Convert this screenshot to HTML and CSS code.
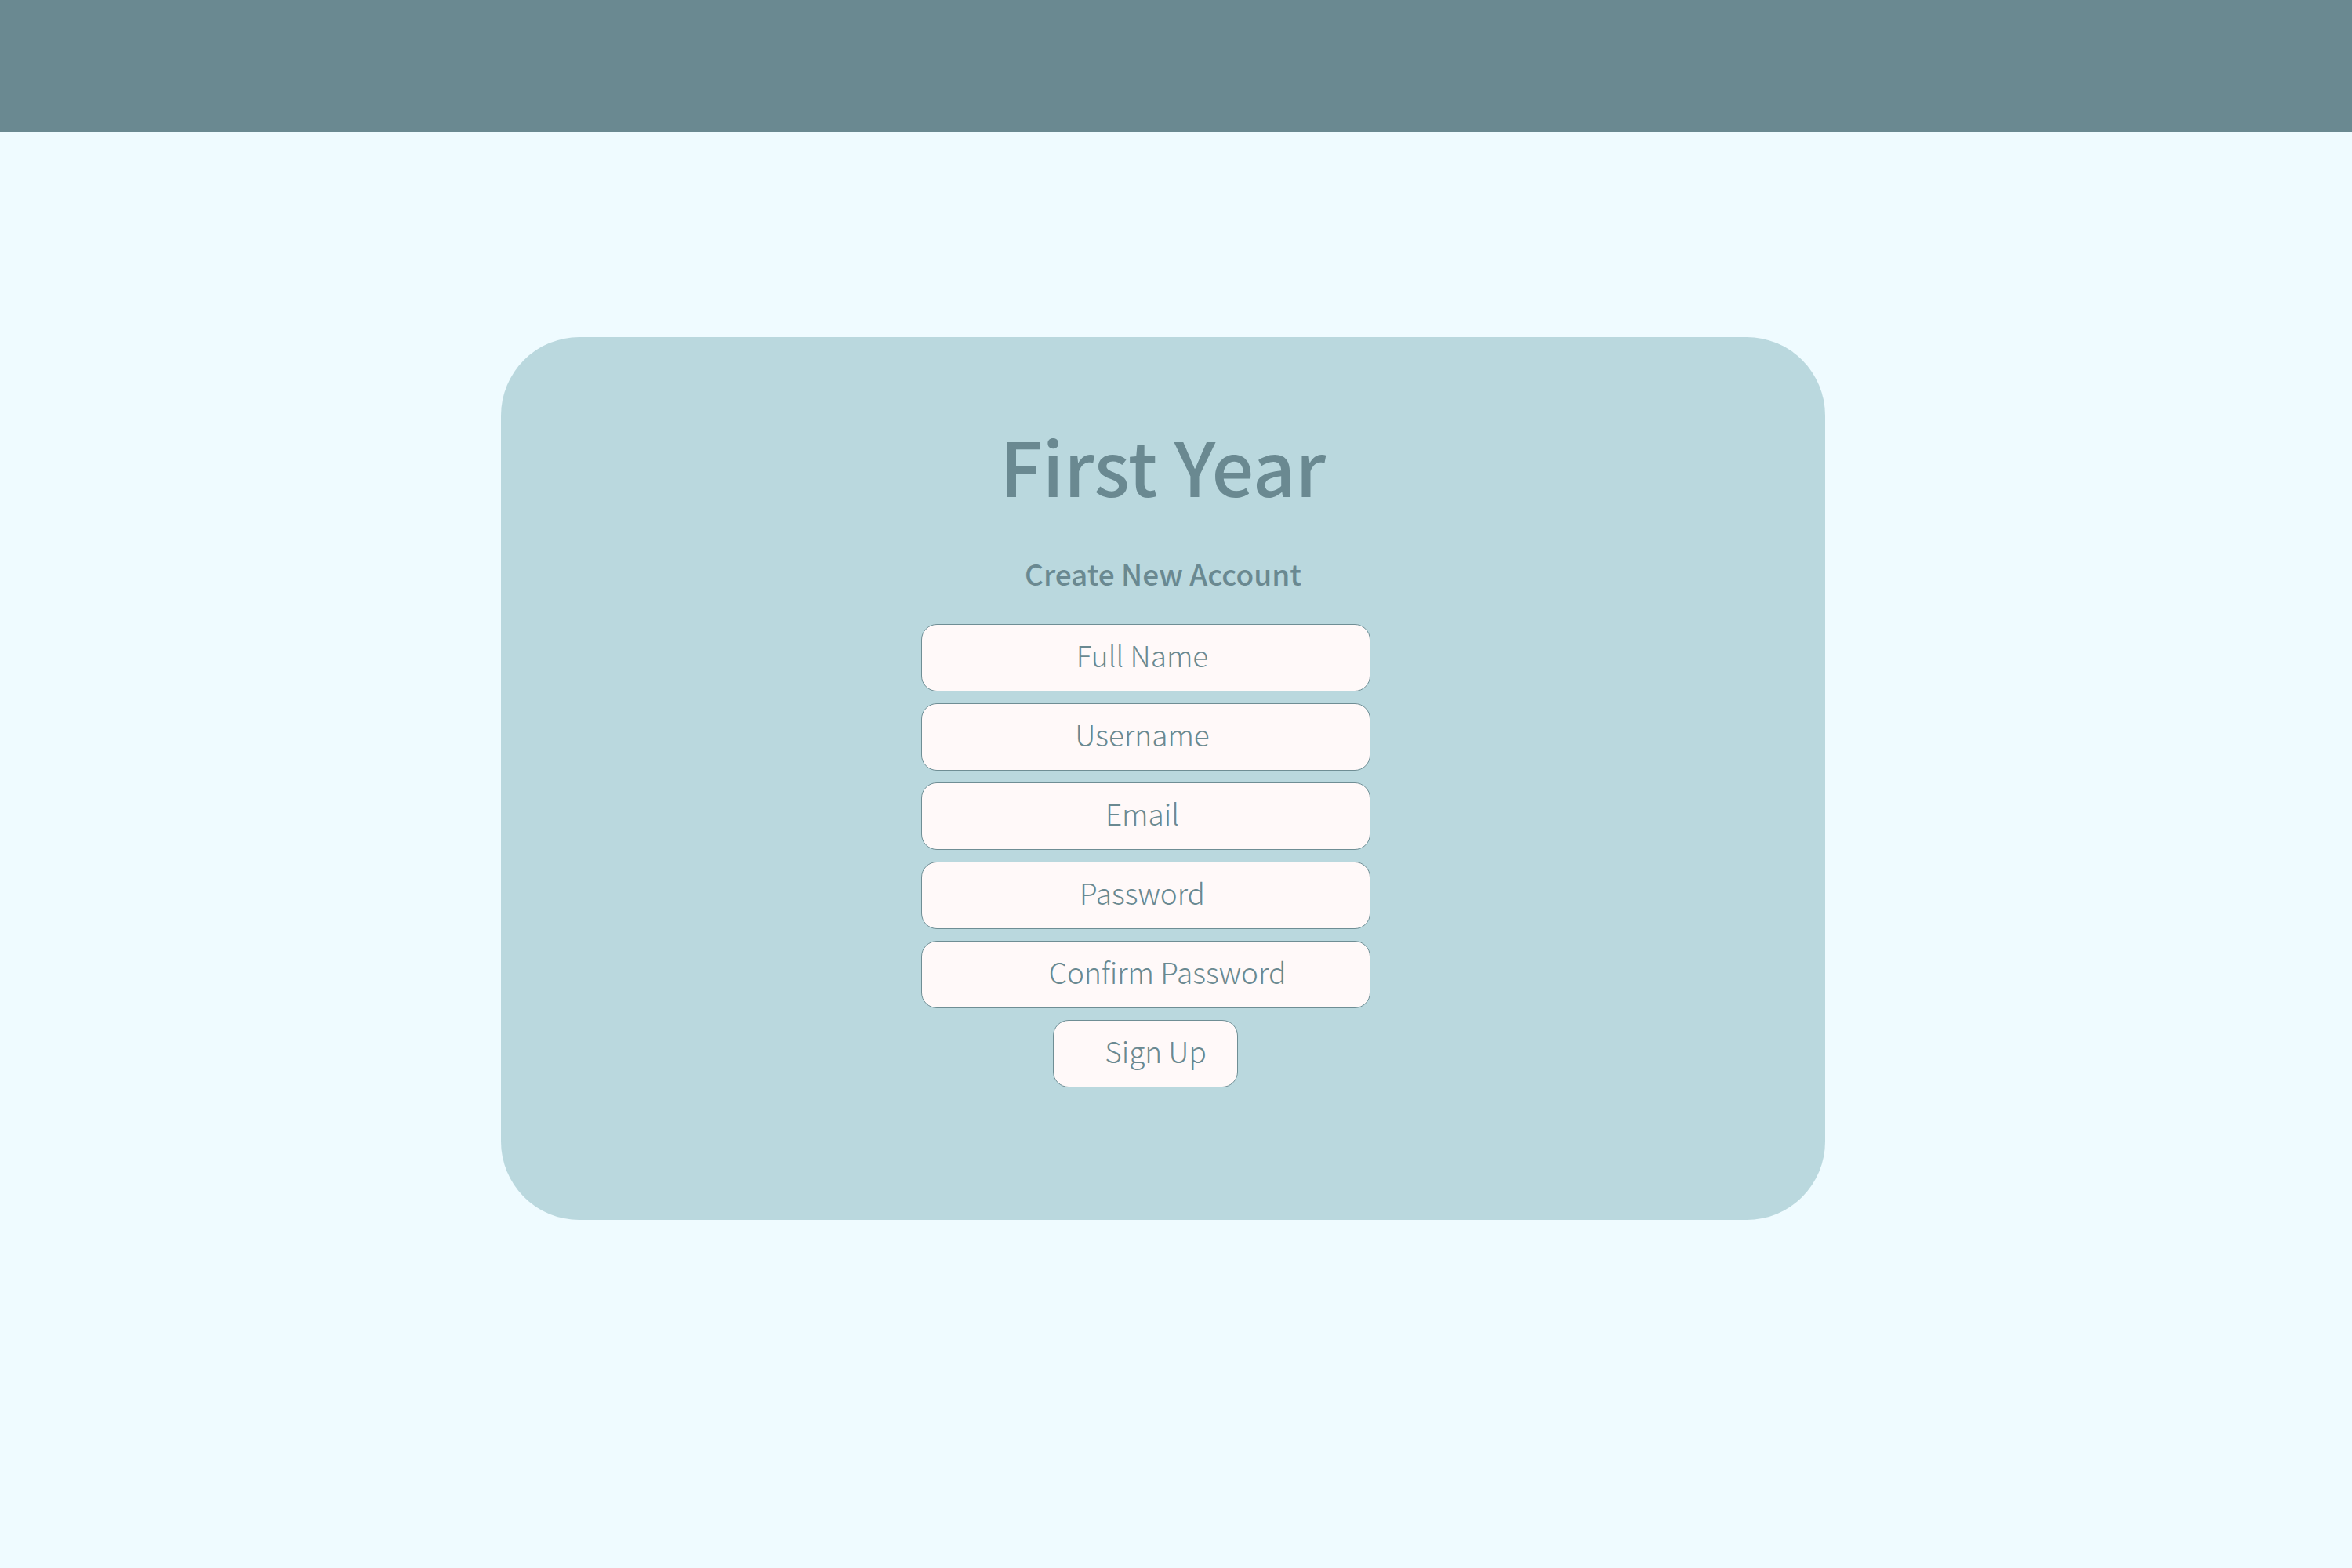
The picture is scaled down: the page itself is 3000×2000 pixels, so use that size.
FILE: index.html
```html
<!DOCTYPE html>
<html lang="en">
<head>
<meta charset="utf-8">
<title>First Year - Sign Up</title>
<link rel="stylesheet" href="styles.css">
</head>
<body>
<header class="topbar"></header>
<main class="page">
  <section class="card">
    <h1 class="title">First Year</h1>
    <h2 class="subtitle">Create New Account</h2>
    <form class="form">
      <input class="field" type="text" placeholder="Full Name">
      <input class="field" type="text" placeholder="Username">
      <input class="field" type="email" placeholder="Email">
      <input class="field" type="password" placeholder="Password">
      <input class="field field-confirm" type="password" placeholder="Confirm Password">
      <button class="submit" type="button">Sign Up</button>
    </form>
  </section>
</main>
</body>
</html>
```
FILE: styles.css
```css
html, body {
  margin: 0;
  padding: 0;
}
body {
  background: #effbff;
  font-family: "Noto Sans CJK KR", "Noto Sans", sans-serif;
  color: #6a8991;
  min-height: 2000px;
}
.topbar {
  height: 169px;
  background: #6a8991;
}
.page {
  padding-top: 261px;
  padding-left: 639px;
}
.card {
  width: 1689px;
  box-sizing: border-box;
  background: #bad8de;
  border-radius: 100px;
  padding: 113px 0 169px;
  display: flex;
  flex-direction: column;
  align-items: center;
}
.title {
  margin: 0;
  font-size: 95px;
  line-height: 100px;
  font-weight: 500;
  color: #6a8991;
}
.subtitle {
  margin: 70px 0 0;
  font-size: 37px;
  line-height: 37px;
  font-weight: 500;
  color: #6a8991;
}
.form {
  margin-top: 46px;
  padding-right: 45px;
  display: flex;
  flex-direction: column;
  align-items: center;
  gap: 15px;
}
.field, .submit {
  box-sizing: border-box;
  height: 86px;
  background: #fff9f9;
  border: 1px solid #6f8e95;
  border-radius: 20px;
  font-family: "Noto Sans CJK KR", "Noto Sans", sans-serif;
  font-size: 37px;
  font-weight: 300;
  color: #6a8991;
  text-align: center;
  outline: none;
  margin: 0;
}
.field {
  width: 573px;
  padding: 0 8px 8px 0;
}
.field::placeholder {
  color: #6a8991;
  opacity: 1;
}
.field-confirm {
  padding: 0 0 8px 56px;
}
.submit {
  width: 236px;
  padding: 0 0 8px 26px;
}
```
